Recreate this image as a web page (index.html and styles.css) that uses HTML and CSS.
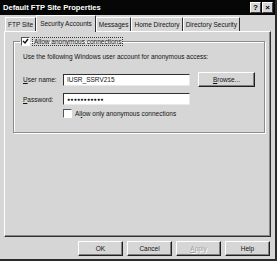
FILE: index.html
```html
<!DOCTYPE html>
<html lang="en">
<head>
  <meta charset="UTF-8">
  <title>Default FTP Site Properties</title>
  <link rel="stylesheet" href="styles.css">
</head>
<body>

  <div class="window">

    <!-- Title bar -->
    <div class="titlebar">
      <span class="title">Default FTP Site Properties</span>
      <div class="caption-btns">
        <span class="cbtn">?</span>
        <span class="cbtn">&#215;</span>
      </div>
    </div>

    <div class="content">

      <!-- Tabs -->
      <div class="tabs">
        <div class="tab">FTP Site</div>
        <div class="tab active">Security Accounts</div>
        <div class="tab">Messages</div>
        <div class="tab">Home Directory</div>
        <div class="tab">Directory Security</div>
      </div>

      <!-- Tab page -->
      <div class="panel">
        <fieldset class="group">
          <legend>
            <span class="check">
              <span class="box">
                <svg width="7" height="7" viewBox="0 0 7 7"><path d="M1 3 L3 5 L6 1" fill="none" stroke="#111" stroke-width="1.4"/></svg>
              </span>
              <span class="focus">Allow anonymous connections</span>
            </span>
          </legend>

          <p class="hint">Use the following Windows user account for anonymous access:</p>

          <div class="row">
            <span class="label"><u>U</u>ser name:</span>
            <div class="input">IUSR_SSRV215</div>
            <span class="btn browse"><u>B</u>rowse...</span>
          </div>

          <div class="row pass">
            <span class="label"><u>P</u>assword:</span>
            <div class="input dots">&#9679;&#9679;&#9679;&#9679;&#9679;&#9679;&#9679;&#9679;&#9679;&#9679;&#9679;</div>
          </div>

          <div class="row only">
            <span class="check">
              <span class="box"></span>
              <span>Al<u>l</u>ow only anonymous connections</span>
            </span>
          </div>
        </fieldset>
      </div>

      <!-- Dialog buttons -->
      <div class="footer">
        <span class="btn">OK</span>
        <span class="btn">Cancel</span>
        <span class="btn disabled"><u>A</u>pply</span>
        <span class="btn">Help</span>
      </div>

    </div>
  </div>

</body>
</html>
```

FILE: styles.css
```css
body {
  margin: 0;
  font-family: "Liberation Sans", Arial, sans-serif;
  font-size: 6.5px;
  color: #141414;
}

.window {
  width: 277px;
  height: 261px;
  box-sizing: border-box;
  background-color: #d6d6d6;
  border-right: 2px solid #2a2a2a;
  border-bottom: 2px solid #2a2a2a;
  display: flex;
  flex-direction: column;
}

.titlebar {
  height: 15px;
  background-color: #060606;
  display: flex;
  align-items: center;
  justify-content: space-between;
  padding: 0 2px 0 3px;
}

.title {
  color: #fff;
  font-weight: bold;
  font-size: 7.6px;
}

.caption-btns {
  display: flex;
  gap: 1px;
}

.cbtn {
  width: 9px;
  height: 9px;
  background-color: #d6d6d6;
  border: 1px solid;
  border-color: #fff #404040 #404040 #fff;
  font-weight: bold;
  font-size: 8px;
  line-height: 9px;
  text-align: center;
  color: #000;
}

.content {
  flex: 1;
  padding: 0 4px 0 4px;
  display: flex;
  flex-direction: column;
}

.tabs {
  display: flex;
  height: 16px;
  align-items: flex-end;
  padding-left: 1px;
}

.tab {
  height: 14px;
  line-height: 13px;
  padding: 0 2px;
  border-left: 1px solid #fff;
  border-top: 1px solid #fff;
  border-right: 1px solid #303030;
  box-sizing: border-box;
  border-radius: 1px 1px 0 0;
}

.tab.active {
  height: 17px;
  margin-bottom: -1px;
  padding: 0 3px;
  background-color: #d6d6d6;
  position: relative;
  line-height: 15px;
}

.panel {
  height: 206px;
  box-sizing: border-box;
  border: 1px solid;
  border-color: #fff #303030 #303030 #fff;
  box-shadow: inset -1px -1px 0 #888;
  padding: 5px 8px 0 8px;
}

.group {
  margin: 0;
  height: 96px;
  box-sizing: border-box;
  border: 1px solid #8c8c8c;
  box-shadow: inset 1px 1px 0 #fff, 1px 1px 0 #fff;
  padding: 2px 9px 0 9px;
}

.group legend {
  padding: 0 1px;
  margin-left: -3px;
}

.check {
  display: flex;
  align-items: center;
  gap: 3px;
}

.box {
  width: 7px;
  height: 7px;
  background-color: #fff;
  border: 1px solid;
  border-color: #555 #fff #fff #555;
  display: flex;
  align-items: center;
  justify-content: center;
}

.focus {
  outline: 1px dotted #333;
  padding: 0 1px;
}

.hint {
  margin: 5px 0 12px 0;
}

.row {
  display: flex;
  align-items: center;
  margin-bottom: 6px;
}

.row.pass {
  margin-bottom: 4px;
}

.label {
  width: 40px;
}

.input {
  width: 127px;
  height: 12px;
  box-sizing: border-box;
  background-color: #fff;
  border: 1px solid;
  border-color: #303030 #e8e8e8 #e8e8e8 #303030;
  padding-left: 3px;
  line-height: 10px;
}

.input.dots {
  font-size: 5px;
  letter-spacing: 0.3px;
}

.btn {
  width: 45px;
  height: 15px;
  box-sizing: border-box;
  border: 1px solid;
  border-color: #fff #202020 #202020 #fff;
  box-shadow: inset -1px -1px 0 #808080;
  text-align: center;
  line-height: 13px;
}

.browse {
  width: 57px;
  margin-left: 8px;
}

.only {
  padding-left: 40px;
  margin-bottom: 0;
}

.footer {
  display: flex;
  justify-content: flex-end;
  gap: 4px;
  padding: 4px 1px 0 0;
}

.btn.disabled {
  color: #a0a0a0;
  text-shadow: 1px 1px 0 #fff;
}
```
